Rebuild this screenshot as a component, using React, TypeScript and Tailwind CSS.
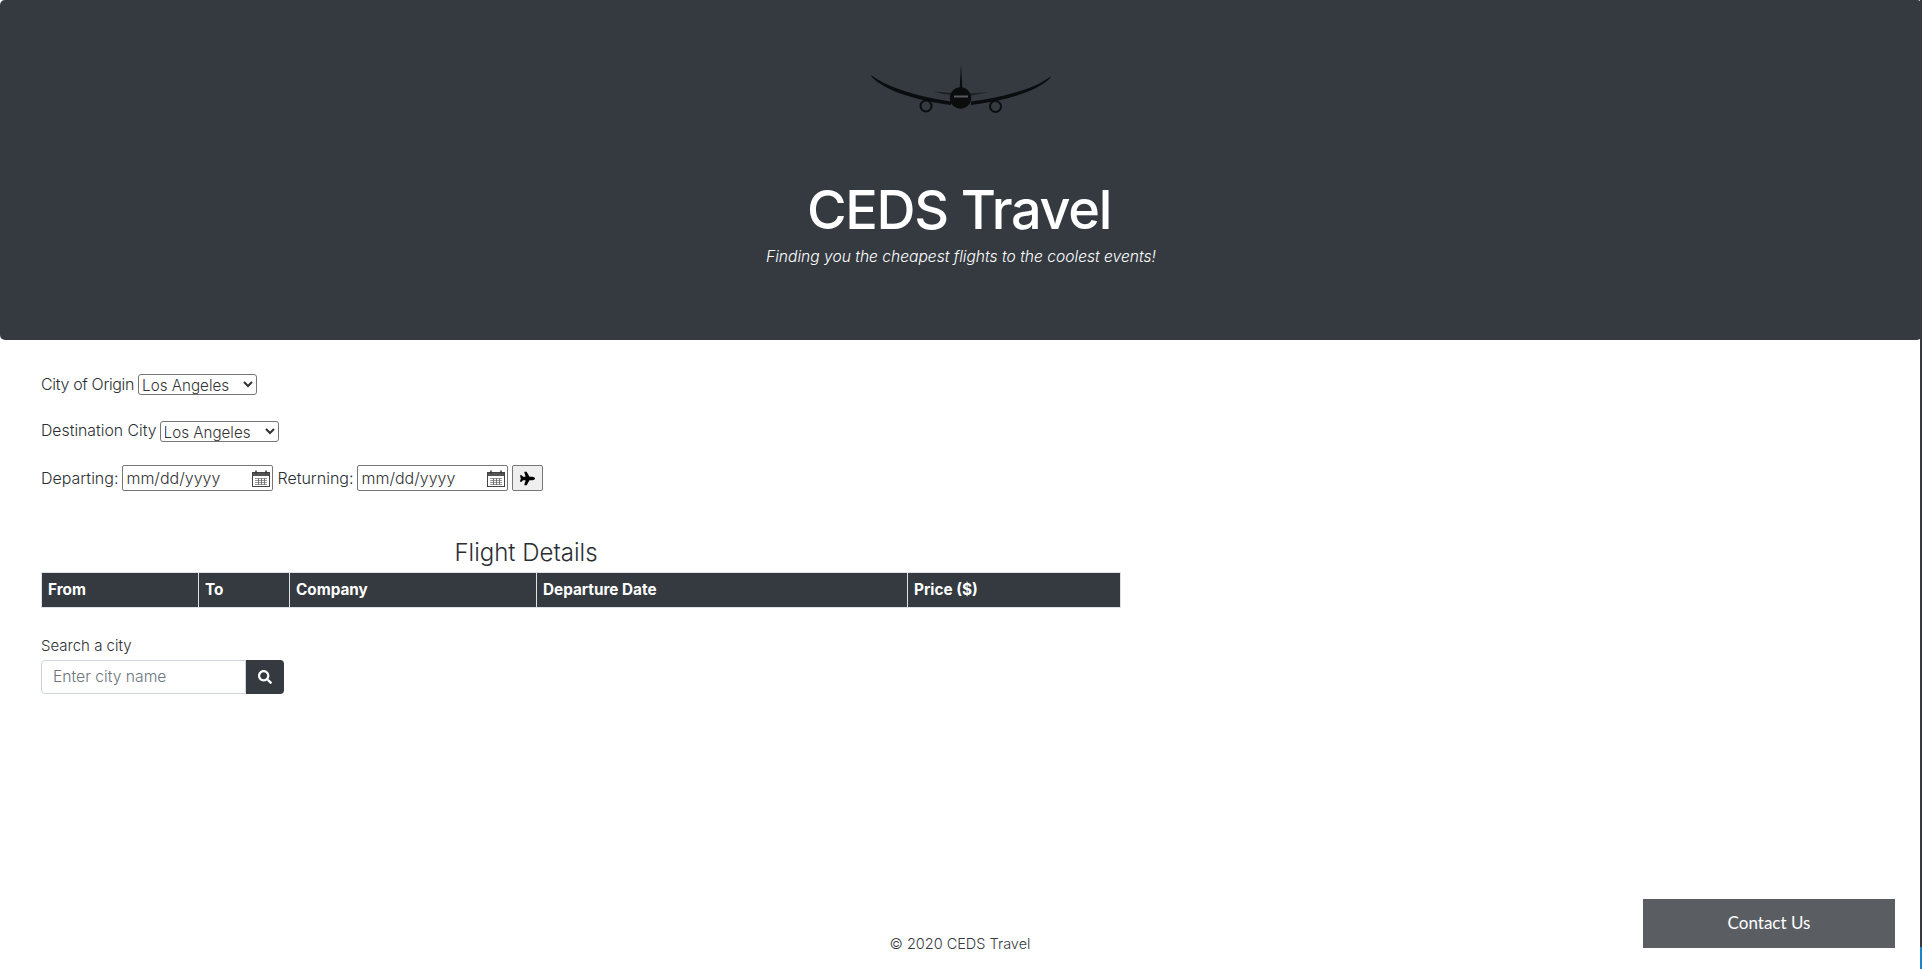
import { FaSearch, FaPlane } from "react-icons/fa"

function Plane() {
  return (
    <svg width="180" height="50" viewBox="0 0 180 50" className="block">
      <path d="M0 11 L0.500 10.500 C18 23 48 32 80 36.500 L80 40 C50 36 14 27 0 11 Z" fill="#0b0c0e" />
      <path d="M180 12 L179.500 11.500 C164 24 132 32 100 36.500 L100 40 C130 36 166 28 180 12 Z" fill="#0b0c0e" />
      <path d="M90 0 L91.500 26 L88.500 26 Z" fill="#0b0c0e" />
      <path d="M62.500 26.500 L81 28 L81 30 L72 29 Z M98 28.500 L118 27 L98 31 Z" fill="#1d2023" />
      <circle cx="89.500" cy="33" r="10.700" fill="#0b0c0e" />
      <rect x="83" y="30.500" width="14" height="2" fill="#55595e" />
      <circle cx="55" cy="41" r="5.500" fill="none" stroke="#0b0c0e" strokeWidth="2" />
      <circle cx="124.500" cy="41.500" r="5.500" fill="none" stroke="#0b0c0e" strokeWidth="2" />
    </svg>
  )
}

function CalendarIcon() {
  return (
    <svg width="18" height="17" viewBox="0 0 18 17" className="shrink-0">
      <rect x="0.500" y="2.500" width="17" height="14" fill="#fff" stroke="#444" />
      <rect x="1" y="3" width="16" height="3" fill="#555" />
      <path d="M4 0.500v3M14 0.500v3" stroke="#333" strokeWidth="1.500" />
      <path d="M3 8.500h12M3 10.500h12M3 12.500h12M3 14.500h12" stroke="#999" strokeWidth="1" />
      <path d="M6.500 8v7M9.500 8v7M12.500 8v7" stroke="#777" strokeWidth="1" />
    </svg>
  )
}

function DateInput() {
  return (
    <span className="inline-flex h-[26px] w-[151px] items-center justify-between rounded-[2px] border border-[#767676] pr-[2px] pl-[3px] text-[16px] text-[#333]">
      mm/dd/yyyy
      <CalendarIcon />
    </span>
  )
}

function CitySelect() {
  return (
    <select className="h-[21px] w-[119px] rounded-[3px] border border-[#767676] bg-white indent-[-1px] text-[15.200px] leading-normal text-[#333] [appearance:auto]">
      <option>Los Angeles</option>
    </select>
  )
}

export default function App() {
  return (
    <div className="relative flex h-[969px] flex-col overflow-hidden bg-white font-['Inter',sans-serif] text-[16px] font-light text-[#2b2f33]">
      <header className="flex h-[340px] shrink-0 flex-col items-center rounded-[5px] bg-[#343a40] pt-[65px] text-white">
        <Plane />
        <h1 className="mt-[60px] pr-[4px] text-[54px] leading-[70px] font-medium tracking-[-1.300px]">CEDS Travel</h1>
        <p className="text-[15.600px] leading-6 font-light italic">Finding you the cheapest flights to the coolest events!</p>
      </header>

      <main className="pt-[24px] pl-[41px]">
        <div className="flex h-[40px] items-center">
          <label className="mr-[4px] tracking-[-0.350px]">City of Origin</label>
          <CitySelect />
        </div>
        <div className="mt-[7px] flex h-[40px] items-center">
          <label className="mr-[3px] text-[15.800px]">Destination City</label>
          <CitySelect />
        </div>
        <div className="mt-[7px] flex h-[40px] items-center gap-1">
          <label>Departing:</label>
          <DateInput />
          <label>Returning:</label>
          <DateInput />
          <button className="flex h-[26px] w-[31px] items-center justify-center rounded-[2px] border border-[#767676] bg-[#efefef] text-black">
            <FaPlane size={15} />
          </button>
        </div>

        <h2 className="mt-[39px] w-[970px] text-center text-[24px] leading-[32px] font-light">Flight Details</h2>
        <table className="mt-[3px] w-[1080px] table-fixed border-collapse text-[15.300px] text-white">
          <thead>
            <tr className="h-[35px] bg-[#343a40] text-left">
              <th className="w-[157px] border border-[#dee2e6] px-[6px] font-bold">From</th>
              <th className="w-[91px] border border-[#dee2e6] px-[6px] font-bold">To</th>
              <th className="w-[247px] border border-[#dee2e6] px-[6px] font-bold">Company</th>
              <th className="w-[371px] border border-[#dee2e6] px-[6px] font-bold">Departure Date</th>
              <th className="border border-[#dee2e6] px-[6px] font-bold">Price ($)</th>
            </tr>
          </thead>
        </table>

        <label className="mt-[27px] block text-[15px] leading-[22px]">Search a city</label>
        <div className="mt-[3px] flex h-[34px] w-[243px]">
          <input
            placeholder="Enter city name"
            className="w-[205px] rounded-l-[4px] border border-[#ced4da] px-[11px] text-[15.700px] font-light outline-none placeholder:text-[#6c757d]"
          />
          <button className="flex flex-1 items-center justify-center rounded-r-[4px] bg-[#343a40] text-white">
            <FaSearch size={14} />
          </button>
        </div>
      </main>

      <footer className="absolute bottom-[14px] left-0 w-full pr-[2px] text-center text-[14.500px] leading-[22px] text-[#343a40]">© 2020 CEDS Travel</footer>
      <button className="absolute top-[899px] left-[1643px] h-[49px] w-[252px] bg-[#5a5e63] pb-[2px] font-['Lato',sans-serif] text-[17px] font-normal text-white">Contact Us</button>
      <div className="absolute top-0 right-0 flex h-full w-[2px] flex-col bg-[#343a40]">
        <div className="mt-auto h-[22px] bg-[#1b84c9]" />
      </div>
    </div>
  )
}
